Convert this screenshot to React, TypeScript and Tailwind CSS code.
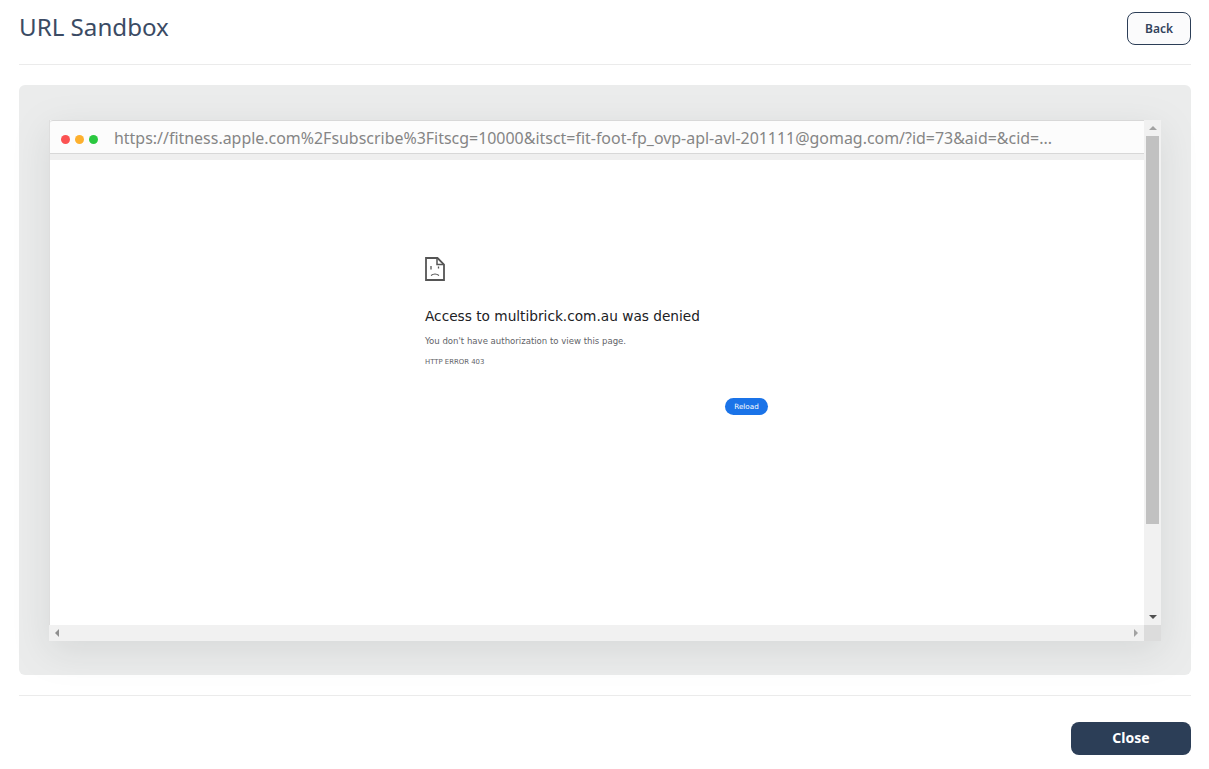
export default function App() {
  return (
    <div className="flex h-[769px] w-full flex-col bg-white pl-[19px] pr-[18px] font-['Noto_Sans',sans-serif] text-[#2c3e57]">
      <header className="flex h-[65px] shrink-0 items-start justify-between border-b border-[#ebebeb]">
        <h1 className="mt-[11px] text-[24.15px] leading-[32px] font-normal text-[#3b4b64]">URL Sandbox</h1>
        <button className="mt-[12px] h-[33px] w-[64px] rounded-[8px] border border-[#2c3e57] bg-[#fbfbfc] text-[12px] font-semibold text-[#33435c]">
          Back
        </button>
      </header>

      <main className="mt-5 h-[590px] shrink-0 rounded-[6px] bg-[#ebecec] pb-[34px] pl-[30px] pr-[30px] pt-[35px]">
        <div className="flex h-[521px] flex-col rounded-[3px] bg-white shadow-[0_10px_36px_rgba(120,125,130,0.18)]">
          <div className="flex min-h-0 flex-1">
            <div className="flex min-w-0 flex-1 flex-col border-l border-[#dedede]">
              <div className="flex h-[34px] shrink-0 items-center rounded-tl-[3px] border-y border-[#d8d8d8] bg-[#fcfcfc] pl-[11px] pt-[4px]">
                <span className="h-[9px] w-[9px] rounded-full bg-[#fb5252]" />
                <span className="ml-[5px] h-[9px] w-[9px] rounded-full bg-[#fdb02e]" />
                <span className="ml-[5px] h-[9px] w-[9px] rounded-full bg-[#2bc840]" />
                <span className="ml-[16px] whitespace-nowrap text-[15.94px] leading-none text-[#858585]">
                  https://fitness.apple.com%2Fsubscribe%3Fitscg=10000&amp;itsct=fit-foot-fp_ovp-apl-avl-201111@gomag.com/?id=73&amp;aid=&amp;cid=...
                </span>
              </div>
              <div className="h-[6px] shrink-0 bg-[#efefef]" />
              <div className="flex-1 bg-white pl-[375px] pt-[97px] font-['DejaVu_Sans',sans-serif]">
                <div className="w-[343px]">
                  <svg width="20" height="24" viewBox="0 0 20 24" fill="none" className="block" stroke="#555555" strokeWidth="1.8">
                    <path d="M1 1H12.5L19 7.5V23H1Z" />
                    <path d="M12 1V7.5H19" strokeWidth="1.5" />
                    <path d="M6 9V12.5M13.5 9.5V11.5" strokeWidth="1.3" />
                    <path d="M6 18.5Q10 15.5 14 18.5" strokeWidth="1.1" />
                  </svg>
                  <h2 className="mt-[26px] whitespace-nowrap text-[13.7px] leading-[18px] font-normal text-[#202124]">
                    Access to multibrick.com.au was denied
                  </h2>
                  <p className="mt-[10px] whitespace-nowrap text-[8.55px] leading-[12px] text-[#5f6368]">
                    You don't have authorization to view this page.
                  </p>
                  <p className="mt-[9px] whitespace-nowrap text-[6.9px] leading-[12px] text-[#5f6368]">HTTP ERROR 403</p>
                  <div className="mt-[30px] flex justify-end">
                    <button className="h-[17px] w-[43px] rounded-full bg-[#1a73e8] text-[7.2px] leading-none text-white">Reload</button>
                  </div>
                </div>
              </div>
            </div>
            <div className="flex w-[17px] shrink-0 flex-col items-center bg-[#f1f1f1]">
              <div className="flex h-[16px] items-center justify-center">
                <span className="h-0 w-0 border-x-[4px] border-b-[4px] border-x-transparent border-b-[#a3a3a3]" />
              </div>
              <div className="h-[388px] w-[13px] bg-[#c1c1c1]" />
              <div className="flex flex-1 items-end justify-center pb-[6px]">
                <span className="h-0 w-0 border-x-[4px] border-t-[4px] border-x-transparent border-t-[#505050]" />
              </div>
            </div>
          </div>
          <div className="flex h-[16px] shrink-0">
            <div className="flex flex-1 items-center justify-between bg-[#f1f1f1] px-[6px]">
              <span className="h-0 w-0 border-y-[4px] border-r-[4px] border-y-transparent border-r-[#8f8f8f]" />
              <span className="h-0 w-0 border-y-[4px] border-l-[4px] border-y-transparent border-l-[#a3a3a3]" />
            </div>
            <div className="w-[17px] bg-[#dcdcdc]" />
          </div>
        </div>
      </main>

      <footer className="mt-5 flex flex-1 items-start justify-end border-t border-[#ebebeb] pt-[26px]">
        <button className="h-[33px] w-[120px] rounded-[8px] bg-[#2c3e57] pb-[2px] text-[14px] font-bold text-white">Close</button>
      </footer>
    </div>
  );
}
